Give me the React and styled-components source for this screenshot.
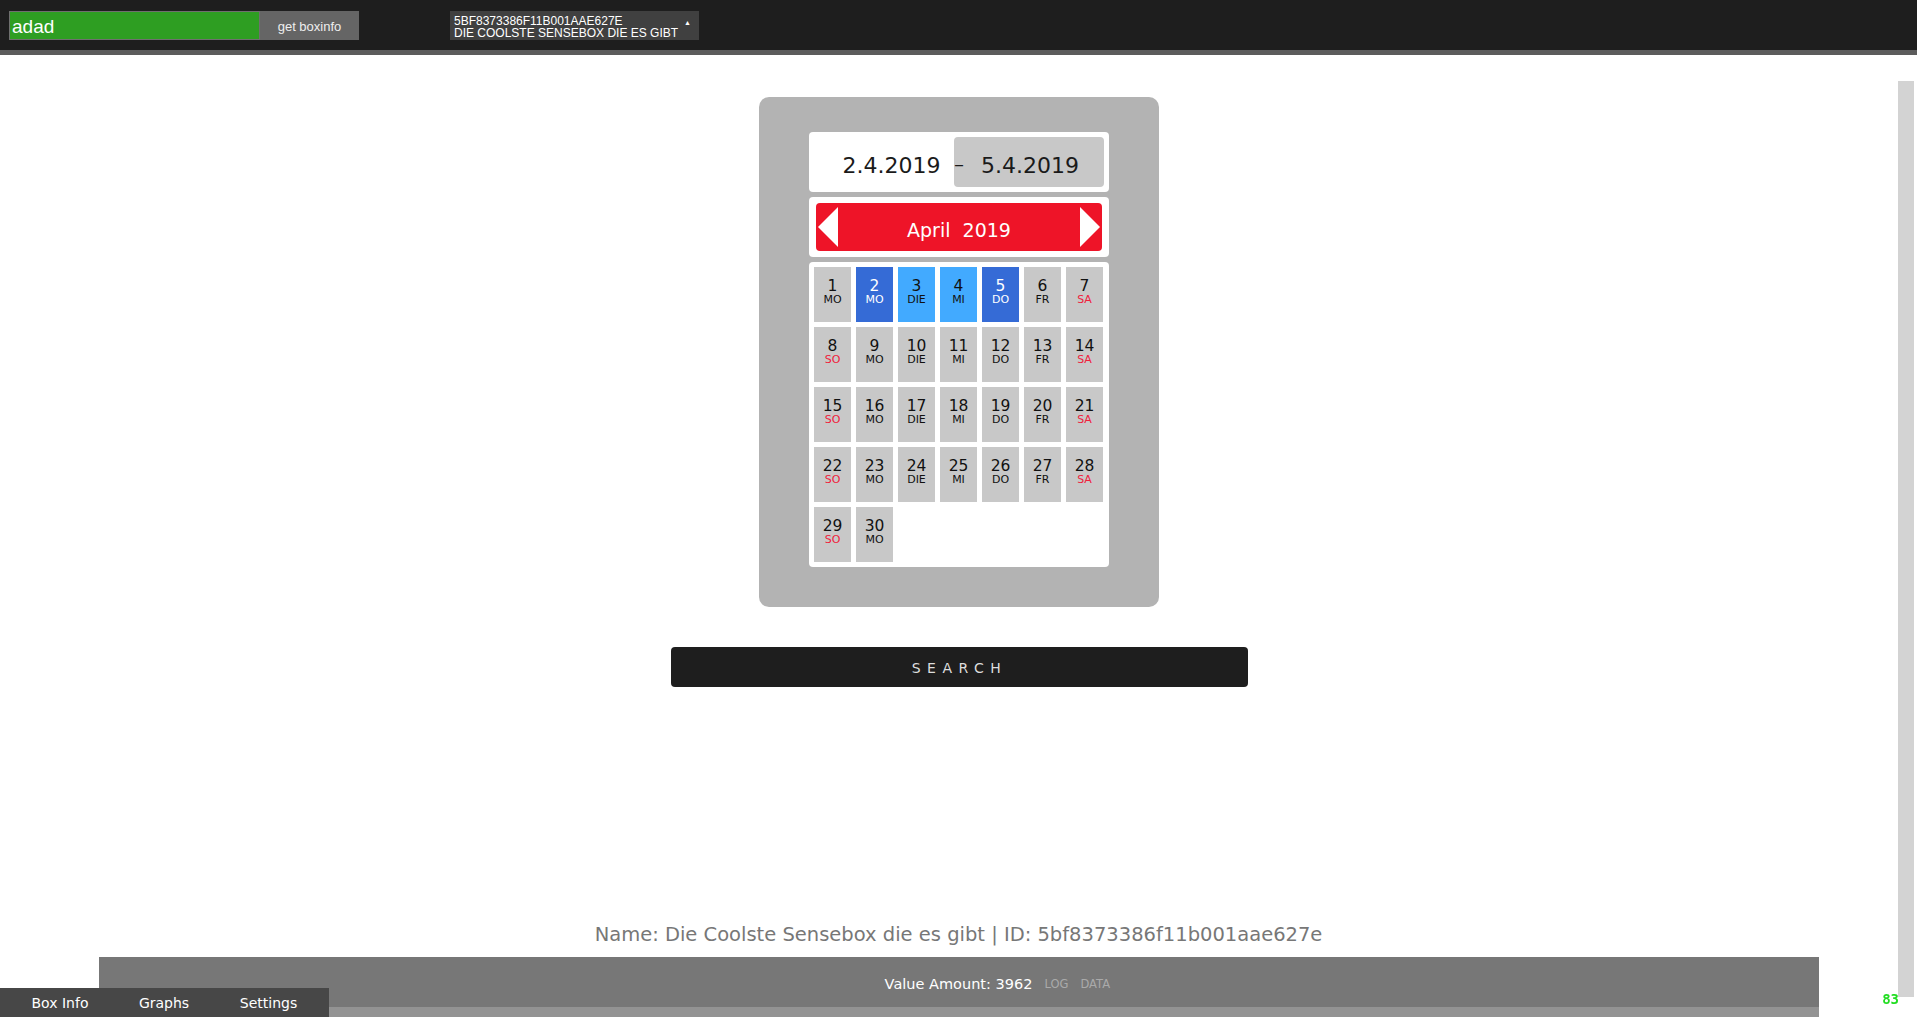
import styled, { createGlobalStyle } from "styled-components";

const GlobalStyle = createGlobalStyle`
  html, body {
    margin: 0;
    padding: 0;
    background: #ffffff;
    overflow: hidden;
  }
  * {
    box-sizing: border-box;
  }
`;

const Page = styled.div`
  display: flex;
  flex-direction: column;
  height: 100vh;
  font-family: "DejaVu Sans", Verdana, sans-serif;
`;

const TopBar = styled.div`
  display: flex;
  align-items: center;
  height: 55px;
  padding: 0 0 0 9px;
  background: #1e1e1e;
  border-bottom: 5px solid #5c5c5c;
  font-family: "Liberation Sans Narrow", "Liberation Sans", Arial, sans-serif;
`;

const BoxInput = styled.input`
  width: 251px;
  height: 29px;
  border: 1px solid #6f6f6f;
  background: #2e9e22;
  color: #ffffff;
  font-family: inherit;
  font-size: 19px;
  padding: 4px 2px 0;
  &:focus {
    outline: none;
  }
`;

const FetchButton = styled.button`
  width: 99px;
  height: 29px;
  border: none;
  padding-top: 4px;
  background: #656565;
  color: #eeeeee;
  font-family: inherit;
  font-size: 13px;
`;

const BoxSelect = styled.div`
  display: flex;
  align-items: center;
  justify-content: space-between;
  width: 249px;
  height: 29px;
  margin-left: 91px;
  padding: 4px 8px 0 4px;
  background: #404040;
  color: #ffffff;
  font-family: "Liberation Sans", Arial, sans-serif;
  font-size: 12px;
  line-height: 12px;
`;

const Caret = styled.span`
  font-size: 7px;
  margin-top: -8px;
`;

const Main = styled.div`
  flex: 1;
  display: flex;
  flex-direction: column;
  align-items: center;
  padding-top: 42px;
`;

const Panel = styled.div`
  display: flex;
  flex-direction: column;
  gap: 5px;
  width: 400px;
  height: 510px;
  padding: 35px 50px 0;
  margin-left: 1px;
  background: #b3b3b3;
  border-radius: 10px;
`;

const WhiteBox = styled.div`
  background: #ffffff;
  border-radius: 4px;
  padding: ${(p) => p.$pad || "5px"};
`;

const DateRow = styled.div`
  display: flex;
  height: 50px;
  align-items: stretch;
`;

const StartDate = styled.div`
  flex: 1;
  display: flex;
  align-items: center;
  justify-content: center;
  padding: 6px 0 0 15px;
  font-size: 22px;
  color: #1a1a1a;
`;

const EndDate = styled.div`
  display: flex;
  align-items: center;
  width: 150px;
  padding-top: 6px;
  background: #c8c8c8;
  border-radius: 4px;
  font-size: 22px;
  color: #1a1a1a;
`;

const Dash = styled.span`
  width: 27px;
  font-size: 20px;
  margin-top: -2px;
`;

const MonthBar = styled.div`
  display: flex;
  align-items: center;
  justify-content: space-between;
  height: 48px;
  padding: 0 2px;
  background: #ee1428;
  border-radius: 4px;
  color: #ffffff;
  font-size: 19px;
`;

const MonthLabel = styled.span`
  padding-top: 5px;
`;

const Arrow = styled.svg`
  width: 20px;
  height: 40px;
  display: block;
`;

const Grid = styled.div`
  display: grid;
  grid-template-columns: repeat(7, 37px);
  grid-auto-rows: 55px;
  gap: 5px;
`;

const Cell = styled.div`
  display: flex;
  flex-direction: column;
  align-items: center;
  padding-top: 11px;
  background: ${(p) => p.$bg};
  color: ${(p) => p.$fg};
`;

const DayNum = styled.span`
  font-size: 15.5px;
  line-height: 16px;
`;

const DayName = styled.span`
  font-size: 11px;
  line-height: 12px;
  color: ${(p) => p.$color || "inherit"};
`;

const SearchButton = styled.button`
  width: 577px;
  height: 40px;
  margin: 40px 0 0 2px;
  padding-top: 3px;
  border: none;
  border-radius: 4px;
  background: #1e1e1e;
  color: #dddddd;
  font-family: "DejaVu Sans", Verdana, sans-serif;
  font-size: 14px;
  letter-spacing: 6.5px;
`;

const BoxName = styled.div`
  text-align: center;
  font-size: 19.5px;
  color: #777777;
  margin-bottom: 11px;
`;

const Footer = styled.div`
  display: grid;
  grid-template-columns: 1fr auto 1fr;
  align-items: center;
  gap: 12px;
  width: 1720px;
  height: 60px;
  margin: 0 auto;
  padding-top: 4px;
  background: #777777;
  border-bottom: 10px solid #939393;
`;

const ValueAmount = styled.span`
  grid-column: 2;
  color: #ffffff;
  font-size: 14.5px;
`;

const Links = styled.span`
  display: flex;
  gap: 12px;
  color: #aaaaaa;
  font-size: 11.5px;
`;

const Tabs = styled.div`
  position: fixed;
  left: 0;
  bottom: 0;
  display: flex;
  width: 329px;
  height: 29px;
  background: #474747;
`;

const Tab = styled.span`
  width: ${(p) => p.$w}px;
  text-align: center;
  line-height: 31px;
  color: #ffffff;
  font-size: 14px;
`;

const ScrollTrack = styled.div`
  position: fixed;
  right: 3px;
  top: 81px;
  bottom: 20px;
  width: 16px;
  background: #d3d3d3;
`;

const Fps = styled.div`
  position: fixed;
  right: 18px;
  bottom: 10px;
  color: #22dd22;
  font-family: "DejaVu Sans Mono", monospace;
  font-size: 14px;
  font-weight: bold;
`;

const NAMES = ["MO", "DIE", "MI", "DO", "FR", "SA", "SO"];

const days = Array.from({ length: 30 }, (_, i) => {
  const n = i + 1;
  const name = n === 1 ? "MO" : NAMES[(n - 2) % 7];
  let bg = "#c8c8c8";
  let fg = "#111111";
  if (n === 2 || n === 5) {
    bg = "#356bd6";
    fg = "#ffffff";
  } else if (n === 3 || n === 4) {
    bg = "#42aaff";
  }
  return { n, name, bg, fg };
});

const App = () => {
  return (
    <Page>
      <GlobalStyle />
      <TopBar>
        <BoxInput defaultValue="adad" />
        <FetchButton>get boxinfo</FetchButton>
        <BoxSelect>
          <div>
            5BF8373386F11B001AAE627E
            <br />
            DIE COOLSTE SENSEBOX DIE ES GIBT
          </div>
          <Caret>▲</Caret>
        </BoxSelect>
      </TopBar>
      <Main>
        <Panel>
          <WhiteBox>
            <DateRow>
              <StartDate>2.4.2019</StartDate>
              <EndDate>
                <Dash>–</Dash>
                5.4.2019
              </EndDate>
            </DateRow>
          </WhiteBox>
          <WhiteBox $pad="6px 7px">
            <MonthBar>
              <Arrow viewBox="0 0 20 40">
                <polygon points="20,0 0,20 20,40" fill="#ffffff" />
              </Arrow>
              <MonthLabel>April&nbsp; 2019</MonthLabel>
              <Arrow viewBox="0 0 20 40">
                <polygon points="0,0 20,20 0,40" fill="#ffffff" />
              </Arrow>
            </MonthBar>
          </WhiteBox>
          <WhiteBox>
            <Grid>
              {days.map((d) => (
                <Cell key={d.n} $bg={d.bg} $fg={d.fg}>
                  <DayNum>{d.n}</DayNum>
                  <DayName
                    $color={d.name === "SA" || d.name === "SO" ? "#f0203c" : null}
                  >
                    {d.name}
                  </DayName>
                </Cell>
              ))}
            </Grid>
          </WhiteBox>
        </Panel>
        <SearchButton>SEARCH</SearchButton>
      </Main>
      <BoxName>
        Name: Die Coolste Sensebox die es gibt | ID: 5bf8373386f11b001aae627e
      </BoxName>
      <Footer>
        <ValueAmount>Value Amount: 3962</ValueAmount>
        <Links>
          <span>LOG</span>
          <span>DATA</span>
        </Links>
      </Footer>
      <Tabs>
        <Tab $w={120}>Box Info</Tab>
        <Tab $w={88}>Graphs</Tab>
        <Tab $w={121}>Settings</Tab>
      </Tabs>
      <ScrollTrack />
      <Fps>83</Fps>
    </Page>
  );
};

export default App;
